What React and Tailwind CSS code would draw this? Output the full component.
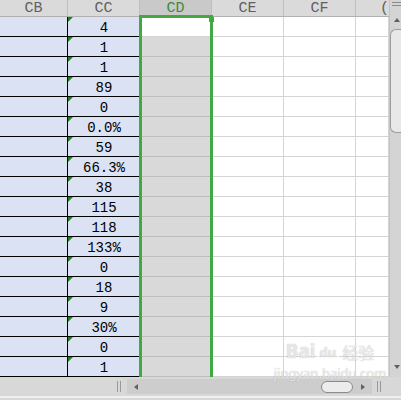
import React from "react";

const values = ["4", "1", "1", "89", "0", "0.0%", "59", "66.3%", "38", "115", "118", "133%", "0", "18", "9", "30%", "0", "1"];

const font = { fontFamily: '"Liberation Mono", "DejaVu Sans Mono", monospace' };

const Row = ({ value, first }) => (
  <div className="flex h-[20px]">
    <div className="w-[68px] shrink-0 bg-[#dbe2f4] border-r border-b border-black"></div>
    <div className="relative w-[72px] shrink-0 bg-[#dbe2f4] border-b border-black flex items-center justify-center text-[14px] text-black leading-none pt-[2px]">
      <span className="absolute left-0 top-0 w-0 h-0 border-t-[5px] border-r-[5px] border-t-[#138a13] border-r-transparent"></span>
      {value}
    </div>
    <div className={`w-[72px] shrink-0 border-b ${first ? "bg-white border-[#d4d4d4]" : "bg-[#d9d9d9] border-[#bdbdbd]"}`}></div>
    <div className="w-[72px] shrink-0 bg-white border-r border-b border-[#d4d4d4]"></div>
    <div className="w-[72px] shrink-0 bg-white border-r border-b border-[#d4d4d4]"></div>
    <div className="w-[33px] shrink-0 bg-white border-r border-b border-[#d4d4d4]"></div>
  </div>
);

const Head = ({ label, w, active }) => (
  <div
    className={`${w} shrink-0 h-full flex items-center justify-center border-r border-[#bfbfbf] text-[15px] leading-none pt-[1px] ${active ? "bg-[#c9c9c9] text-[#3c8c3c]" : "text-[#606060]"}`}
  >
    {label}
  </div>
);

export default function App() {
  return (
    <div className="relative w-[401px] h-[400px] overflow-hidden bg-[#d8d8d8]" style={font}>
      <div className="flex h-[377px]">
        <div className="w-[389px] shrink-0 flex flex-col">
          <div className="flex h-[17px] bg-[#dadada] border-b border-[#b0b0b0]">
            <Head label="CB" w="w-[68px]" />
            <Head label="CC" w="w-[72px]" />
            <Head label="CD" w="w-[72px]" active />
            <Head label="CE" w="w-[72px]" />
            <Head label="CF" w="w-[72px]" />
            <div className="w-[33px] shrink-0 flex items-center justify-end text-[15px] text-[#606060] leading-none pt-[1px]">(</div>
          </div>
          {values.map((v, i) => (
            <Row key={i} value={v} first={i === 0} />
          ))}
        </div>
        <div className="flex-1 flex flex-col items-end bg-[#d4d4d4] border-l border-[#c4c4c4]">
          <div className="w-full flex flex-col gap-[2px] items-center pt-[2px] pl-[2px]">
            <div className="w-[9px] h-px bg-[#8a8a8a]"></div>
            <div className="w-[9px] h-px bg-[#8a8a8a]"></div>
          </div>
          <div className="w-full flex justify-center mt-[12px] pl-[2px]">
            <div className="w-0 h-0 border-l-[3px] border-r-[3px] border-b-[4px] border-l-transparent border-r-transparent border-b-[#606060]"></div>
          </div>
          <div className="mt-[7px] w-[11px] h-[104px] bg-[#e8e8e8] border border-r-0 border-[#9c9c9c] rounded-tl-[6px] rounded-bl-[6px]"></div>
          <div className="flex-1"></div>
          <div className="w-full flex justify-center mb-[8px] pl-[2px]">
            <div className="w-0 h-0 border-l-[3px] border-r-[3px] border-t-[4px] border-l-transparent border-r-transparent border-t-[#606060]"></div>
          </div>
        </div>
      </div>

      <div className="flex items-center h-[21px] bg-[#d8d8d8] border-b-2 border-[#f0f0f0]">
        <div className="w-[117px] shrink-0"></div>
        <div className="w-[4px] h-[11px] border-l border-r border-[#9a9a9a]"></div>
        <div className="ml-[6px] w-[245px] h-[15px] bg-[#cdcdcd] flex items-center px-[7px]">
          <div className="w-0 h-0 border-t-[3px] border-b-[3px] border-r-[4px] border-t-transparent border-b-transparent border-r-[#606060]"></div>
          <div className="flex-1"></div>
          <div className="w-[32px] h-[12px] rounded-full bg-[#ececec] border border-[#8a8a8a] mr-[8px]"></div>
          <div className="w-0 h-0 border-t-[3px] border-b-[3px] border-l-[4px] border-t-transparent border-b-transparent border-l-[#606060]"></div>
        </div>
        <div className="ml-[5px] w-[4px] h-[11px] border-l border-r border-[#9a9a9a]"></div>
      </div>

      {/* selection outline on column CD */}
      <div className="absolute left-[139px] top-[15px] w-[74px] h-[362px] border-[3px] border-b-0 border-[#42a843] pointer-events-none"></div>
      <div className="absolute left-[209px] top-[17px] w-[5px] h-[5px] bg-[#42a843]"></div>

      {/* watermark */}
      <div
        className="absolute left-[283px] top-[342px] w-[94px] flex flex-col items-center text-white/70 pointer-events-none leading-none"
        style={{ fontFamily: '"Noto Sans", "Noto Sans CJK SC", sans-serif', textShadow: "0 0 1px rgba(120,120,120,0.6)" }}
      >
        <div className="flex items-end gap-[1px]">
          <span className="text-[19px] font-bold">Bai</span>
          <span className="text-[13px] font-bold border-2 border-white/70 rounded-[4px] px-[1px]">du</span>
          <span className="text-[16px] ml-[2px]">经验</span>
        </div>
        <span className="text-[13px] mt-[6px]">jingyan.baidu.com</span>
      </div>
    </div>
  );
}
